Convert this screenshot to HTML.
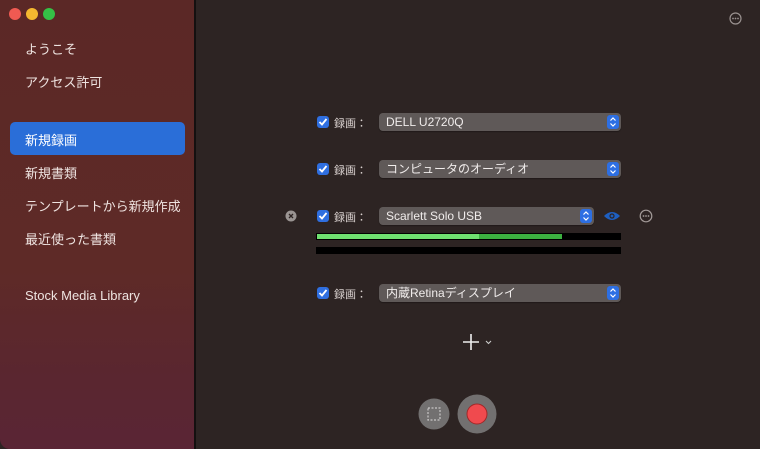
<!DOCTYPE html>
<html><head><meta charset="utf-8"><style>
*{margin:0;padding:0;box-sizing:border-box}
body{width:760px;height:449px;overflow:hidden;background:#2d2423;font-family:"Liberation Sans","Noto Sans CJK JP",sans-serif;position:relative}
#side{position:absolute;left:0;top:0;width:196px;height:449px;background:linear-gradient(180deg,#5b2826 0%,#5e2a27 60%,#5a2630 85%,#5a2535 100%);border-right:2px solid #141010;border-radius:0 0 0 10px}
.dot{position:absolute;top:8px;width:12px;height:12px;border-radius:50%}
.it{position:absolute;left:25px;color:#eee3e0;font-size:13px}
#sel{position:absolute;left:10px;top:122px;width:175px;height:33px;background:#2a6ed8;border-radius:5px}
.cb{position:absolute;width:12px;height:12px;background:#2f6fe0;border-radius:3px}
.cb svg{position:absolute;left:1px;top:1px}
.lb{position:absolute;color:#d8d0ce;font-size:11px}
.pp{position:absolute;height:18px;background:#5f5958;border-radius:4px;color:#f0eceb;font-size:12px;padding-left:7px;line-height:19px;box-shadow:0 1px 1px rgba(0,0,0,.3)}
.st{position:absolute;right:2px;top:2px;width:12px;height:14px;background:#2d6fe3;border-radius:3px}
.st svg{position:absolute;left:2px;top:2px}
</style></head><body>
<div id="side">
<div class="dot" style="left:9px;background:#f05a52"></div>
<div class="dot" style="left:26px;background:#f4b830"></div>
<div class="dot" style="left:43px;background:#35c146"></div>
<div class="it" style="top:39px">ようこそ</div>
<div class="it" style="top:72px">アクセス許可</div>
<div id="sel"></div>
<div class="it" style="top:130px;color:#fff">新規録画</div>
<div class="it" style="top:163px">新規書類</div>
<div class="it" style="top:196px">テンプレートから新規作成</div>
<div class="it" style="top:229px">最近使った書類</div>
<div class="it" style="top:288px">Stock Media Library</div>
</div>
<svg style="position:absolute;left:729px;top:12px" width="13" height="13"><circle cx="6.5" cy="6.5" r="5.5" fill="none" stroke="#9a9290" stroke-width="1.2"/><circle cx="4" cy="6.5" r=".9" fill="#9a9290"/><circle cx="6.5" cy="6.5" r=".9" fill="#9a9290"/><circle cx="9" cy="6.5" r=".9" fill="#9a9290"/></svg>

<div class="cb" style="left:317px;top:116px"><svg width="10" height="10"><path d="M1.5 5 L4 7.5 L8.5 2" stroke="#fff" stroke-width="1.8" fill="none"/></svg></div>
<div class="lb" style="left:334px;top:115px">録画：</div>
<div class="pp" style="left:379px;top:113px;width:242px">DELL U2720Q<div class="st"><svg width="8" height="10"><path d="M1.5 3.5 L4 1 L6.5 3.5 M1.5 6.5 L4 9 L6.5 6.5" stroke="#fff" stroke-width="1.2" fill="none"/></svg></div></div>

<div class="cb" style="left:317px;top:163px"><svg width="10" height="10"><path d="M1.5 5 L4 7.5 L8.5 2" stroke="#fff" stroke-width="1.8" fill="none"/></svg></div>
<div class="lb" style="left:334px;top:162px">録画：</div>
<div class="pp" style="left:379px;top:160px;width:242px">コンピュータのオーディオ<div class="st"><svg width="8" height="10"><path d="M1.5 3.5 L4 1 L6.5 3.5 M1.5 6.5 L4 9 L6.5 6.5" stroke="#fff" stroke-width="1.2" fill="none"/></svg></div></div>

<svg style="position:absolute;left:285px;top:210px" width="12" height="12"><circle cx="6" cy="6" r="5.5" fill="#9a9492"/><path d="M4 4 L8 8 M8 4 L4 8" stroke="#2d2423" stroke-width="1.3"/></svg>
<div class="cb" style="left:317px;top:210px"><svg width="10" height="10"><path d="M1.5 5 L4 7.5 L8.5 2" stroke="#fff" stroke-width="1.8" fill="none"/></svg></div>
<div class="lb" style="left:334px;top:209px">録画：</div>
<div class="pp" style="left:379px;top:207px;width:215px">Scarlett Solo USB<div class="st"><svg width="8" height="10"><path d="M1.5 3.5 L4 1 L6.5 3.5 M1.5 6.5 L4 9 L6.5 6.5" stroke="#fff" stroke-width="1.2" fill="none"/></svg></div></div>
<svg style="position:absolute;left:603px;top:210px" width="18" height="12"><path d="M1 6 Q9 -2 17 6 Q9 14 1 6Z" fill="#1e5fc0"/><circle cx="9" cy="6" r="2.6" fill="#2d2423"/><circle cx="9" cy="6" r="1.4" fill="#1e5fc0"/></svg>
<svg style="position:absolute;left:639px;top:209px" width="14" height="14"><circle cx="7" cy="7" r="5.8" fill="none" stroke="#a29a98" stroke-width="1.2"/><circle cx="4.5" cy="7" r=".9" fill="#a29a98"/><circle cx="7" cy="7" r=".9" fill="#a29a98"/><circle cx="9.5" cy="7" r=".9" fill="#a29a98"/></svg>
<div style="position:absolute;left:316px;top:233px;width:305px;height:7px;background:#000"></div>
<div style="position:absolute;left:317px;top:234px;width:162px;height:5px;background:#6fe070"></div>
<div style="position:absolute;left:479px;top:234px;width:83px;height:5px;background:#3cb040"></div>
<div style="position:absolute;left:316px;top:247px;width:305px;height:7px;background:#000"></div>

<div class="cb" style="left:317px;top:287px"><svg width="10" height="10"><path d="M1.5 5 L4 7.5 L8.5 2" stroke="#fff" stroke-width="1.8" fill="none"/></svg></div>
<div class="lb" style="left:334px;top:286px">録画：</div>
<div class="pp" style="left:379px;top:284px;width:242px">内蔵Retinaディスプレイ<div class="st"><svg width="8" height="10"><path d="M1.5 3.5 L4 1 L6.5 3.5 M1.5 6.5 L4 9 L6.5 6.5" stroke="#fff" stroke-width="1.2" fill="none"/></svg></div></div>

<svg style="position:absolute;left:461px;top:332px" width="34" height="20"><path d="M10 2 V18 M2 10 H18" stroke="#eee" stroke-width="1.6"/><path d="M25 9 L27.5 11.5 L30 9" stroke="#ccc" stroke-width="1.1" fill="none"/></svg>

<svg style="position:absolute;left:418px;top:393px" width="82" height="42"><circle cx="16" cy="21" r="15.5" fill="#727070"/><rect x="10" y="15" width="12" height="12" fill="none" stroke="#c9c7c7" stroke-width="1.2" stroke-dasharray="2 1.5"/><circle cx="59" cy="21" r="19.5" fill="#727070"/><circle cx="59" cy="21" r="10" fill="#f04a4e" stroke="#a02828" stroke-width="1"/></svg>
</body></html>
